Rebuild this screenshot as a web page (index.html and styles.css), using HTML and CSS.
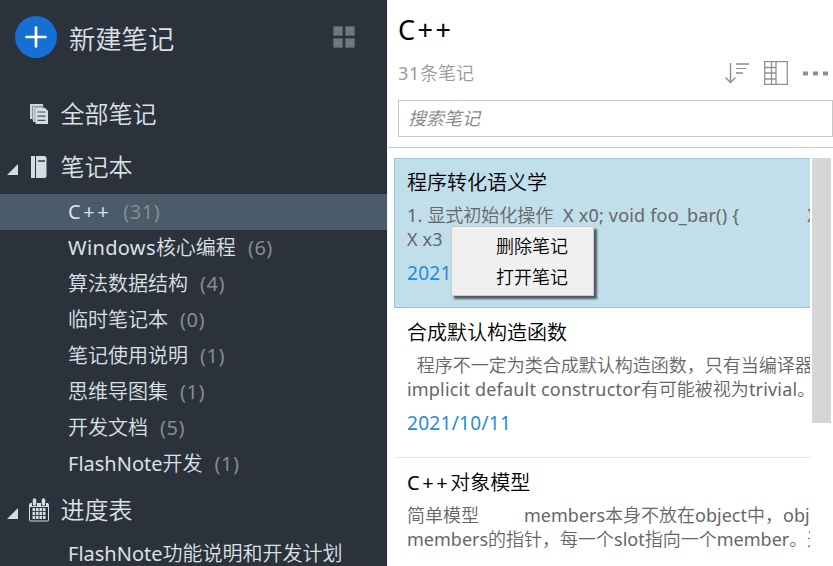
FILE: index.html
```html
<!DOCTYPE html>
<html lang="zh-CN">
<head>
<meta charset="utf-8">
<title>FlashNote</title>
<link rel="stylesheet" href="styles.css">
</head>
<body>
<div class="app">
  <nav class="sidebar">
    <header class="new-note">
      <svg class="plus" width="42" height="42" viewBox="0 0 42 42"><circle cx="21" cy="21" r="21" fill="#1670d3"/><path d="M21 11.500v19M11.500 21h19" stroke="#fff" stroke-width="2.700" stroke-linecap="round"/></svg>
      <span class="new-label">新建笔记</span>
      <svg class="grid-icon" width="22" height="22" viewBox="0 0 22 22" fill="#6d7980" stroke="#525e66"><path d="M.5.5h9v9h-9zM12.500.5h9v9h-9zM.5 12.500h9v9h-9zM12.500 12.500h9v9h-9z"/></svg>
    </header>
    <div class="section all">
      <svg class="sec-icon" width="20" height="22" viewBox="0 0 20 22"><path d="M1 1h13v4H7v14H4v-3H1z" fill="#cdd4db"/><path d="M3.500 17V3.500H15M6 19V5H16" fill="none" stroke="#77808a" stroke-width=".8"/><path d="M6.500 5H16l3 3v13H6.500z" fill="#d5dce3"/><path d="M8.500 9h8M8.500 13.200h8M8.500 17.300h8" stroke="#4b545d" stroke-width="1.200"/></svg>
      <span>全部笔记</span>
    </div>
    <div class="section books">
      <svg class="arrow" width="11" height="11" viewBox="0 0 11 11"><path d="M11 0v11H0z" fill="#d5dce3"/></svg>
      <svg class="sec-icon" width="20" height="22" viewBox="0 0 20 22"><path d="M2 0h4v22H2zM7 0h8.500q2 0 2 2v18q0 2-2 2H7z" fill="#d5dce3"/><path d="M9 5h7" stroke="#5d666e" stroke-width="2"/></svg>
      <span>笔记本</span>
    </div>
    <ul class="books-list">
      <li class="active"><b class="wide-c">C++</b><i>(31)</i></li>
      <li><span><b class="win">Windows</b>核心编程</span><i>(6)</i></li>
      <li><span>算法数据结构</span><i>(4)</i></li>
      <li><span>临时笔记本</span><i>(0)</i></li>
      <li><span>笔记使用说明</span><i>(1)</i></li>
      <li><span>思维导图集</span><i>(1)</i></li>
      <li><span>开发文档</span><i>(5)</i></li>
      <li><span><b>FlashNote</b>开发</span><i>(1)</i></li>
    </ul>
    <div class="section plan">
      <svg class="arrow" width="11" height="11" viewBox="0 0 11 11"><path d="M11 0v11H0z" fill="#d5dce3"/></svg>
      <svg class="sec-icon" width="20" height="24" viewBox="0 0 20 24"><rect x=".5" y="5.500" width="19" height="17.500" rx="1" fill="none" stroke="#d5dce3"/><path d="M1 5h18v4H1z" fill="#d5dce3"/><path d="M5.500 0v8M14.500 0v8" stroke="#2b323b" stroke-width="5"/><path d="M5.500 2v4M14.500 2v4" stroke="#d5dce3" stroke-width="3.500" stroke-linecap="round"/><path d="M3.500 10h13v11h-13z" fill="#d5dce3"/><path d="M6.500 10v11M10 10v11M13.500 10v11M3 13.500h14M3 17.500h14" stroke="#3e464f"/></svg>
      <span>进度表</span>
    </div>
    <ul class="plan-list"><li><span><b>FlashNote</b>功能说明和开发计划</span></li></ul>
  </nav>
  <main class="notes">
    <header class="head">
      <h1>C++</h1>
      <div class="toolbar">
        <span class="count"><b>31</b>条笔记</span>
        <svg width="24" height="22" viewBox="0 0 24 22" fill="none" stroke="#8c9094"><path d="M5.500 1v19M.5 15.500l5 5 5-5" stroke-width="1.400"/><path d="M11 2h13" stroke="#a5a8aa" stroke-width="2"/><path d="M11 6.500h10"/><path d="M11 11h7" stroke="#a5a8aa" stroke-width="2"/></svg>
        <svg class="cols" width="24" height="24" viewBox="0 0 24 24" fill="none" stroke="#909394" stroke-width="1.300"><path d="M.7.7h22.600v22.600H.7zM7.500 1v22M12 1v22M1 6.500h11M1 12h11M1 18h11"/></svg>
        <svg class="dots" width="25" height="5" viewBox="0 0 25 5" fill="#8e9192"><path d="M0 .5h5v4H0zM10 .5h5v4h-5zM20 .5h5v4h-5z"/></svg>
      </div>
      <div class="search">搜索笔记</div>
    </header>
    <div class="scroll">
      <div class="list">
        <article class="note selected">
          <h2>程序转化语义学</h2>
          <p><b>1. </b>显式初始化操作<b>&nbsp; X x0; void foo_bar() {</b><span class="gap"></span><b>X</b><br><b>X x3</b></p>
          <time>2021</time>
        </article>
        <article class="note">
          <h2>合成默认构造函数</h2>
          <p><b>&nbsp; </b>程序不一定为类合成默认构造函数，只有当编译器<br><b>implicit default constructor</b>有可能被视为<b>trivial</b>。</p>
          <time>2021/10/11</time>
        </article>
        <article class="note">
          <h2><b class="wide-c">C++</b>对象模型</h2>
          <p>简单模型<span class="gap short"></span><b class="plain">members</b>本身不放在<b class="plain">object</b>中，<b class="plain">obj</b><br><b class="plain">members</b>的指针，每一个<b class="plain">slot</b>指向一个<b class="plain">member</b>。这</p>
        </article>
      </div>
      <div class="thumb"></div>
    </div>
  </main>
  <div class="menu"><div>删除笔记</div><div>打开笔记</div></div>
</div>
</body>
</html>
```
FILE: styles.css
```css
* { box-sizing: border-box; }
body { margin: 0; width: 833px; height: 566px; overflow: hidden; font-family: "Noto Sans", "Noto Sans CJK SC", sans-serif; font-weight: 350; }
svg { display: block; flex: none; }
ul { list-style: none; margin: 0; padding: 0; }
h1, h2, p { margin: 0; font-weight: inherit; }
b { font-weight: 400; }
i { font-style: normal; font-weight: 400; color: #858c92; margin-left: 12px; letter-spacing: .5px; }
.app { display: flex; height: 566px; position: relative; }
.sidebar { width: 387px; flex: none; height: 566px; overflow: hidden; background: #2b323b; color: #dce1e6; white-space: nowrap; }
.new-note { display: flex; height: 88px; padding: 16px 32px 0 15px; align-items: flex-start; }
.new-label { font-size: 26.3px; line-height: 42px; margin-left: 12px; margin-top: 2px; flex: 1; }
.grid-icon { margin-top: 10px; }
.section { display: flex; align-items: center; height: 54px; padding-left: 7px; font-size: 24px; line-height: 36px; }
.all { padding-left: 29px; height: 51px; }
.books { height: 55px; }
.sec-icon { margin-right: 11.5px; }
.arrow { margin: 6px 11px 0 0; }
.sidebar li { height: 36px; line-height: 36px; padding-left: 68px; font-size: 20px; display: flex; }
.sidebar li.active { background: #4a5c69; }
.wide-c { letter-spacing: 2.6px; }
.win { letter-spacing: .35px; }
.plan { padding-top: 2px; height: 54px; }
.notes { flex: 1; min-width: 0; background: #fff; color: #000; display: flex; flex-direction: column; border-left: 1px solid #f0f0f0; }
.head { height: 148px; border-bottom: 1px solid #c8c8c8; padding-left: 10px; flex: none; }
h1 { font-size: 27px; line-height: 36px; padding-top: 12px; height: 57px; letter-spacing: 2.5px; font-weight: 400; }
.toolbar { display: flex; align-items: center; height: 32px; padding-right: 5px; }
.count { font-size: 18px; line-height: 28px; color: #999; flex: 1; margin-top: -1px; }
.count b { letter-spacing: .7px; }
.cols { margin: 0 15px 0 15px; }
.search { margin-top: 11px; height: 37px; border: 1px solid #c8c8c8; padding-left: 9px; font-size: 18px; line-height: 35px; font-style: italic; color: #858585; }
.scroll { display: flex; padding: 10px 0 0 6px; flex: 1; min-height: 0; }
.list { width: 416px; overflow: hidden; flex: none; white-space: nowrap; }
.note { height: 150px; padding: 9px 0 0 12px; border: solid transparent; border-width: 1px 0 1px 1px; border-bottom-color: #e5e5e5; }
.selected { background: #c1deeb; border-color: #90c5df; }
h2 { font-size: 20px; line-height: 30px; margin-bottom: 5px; }
.note p { font-size: 18px; line-height: 24px; color: #666; }
.note p b { letter-spacing: .19px; }
.note p b.plain { letter-spacing: 0; }
time { display: block; font-size: 19px; line-height: 28px; margin-top: 8px; color: #268bd9; font-weight: 400; letter-spacing: .3px; }
.gap { display: inline-block; width: 68px; }
.gap.short { width: 45px; }
.thumb { width: 19px; height: 265px; margin-left: 2px; background: #d6d6d6; }
.menu { position: absolute; left: 451px; top: 226px; width: 143px; height: 70px; border: 1px solid #ccc; background: #f0f0f0; padding: 4px 0 0 44px; font-size: 18px; line-height: 31px; box-shadow: 3px 3px 2px #0009; }
```
